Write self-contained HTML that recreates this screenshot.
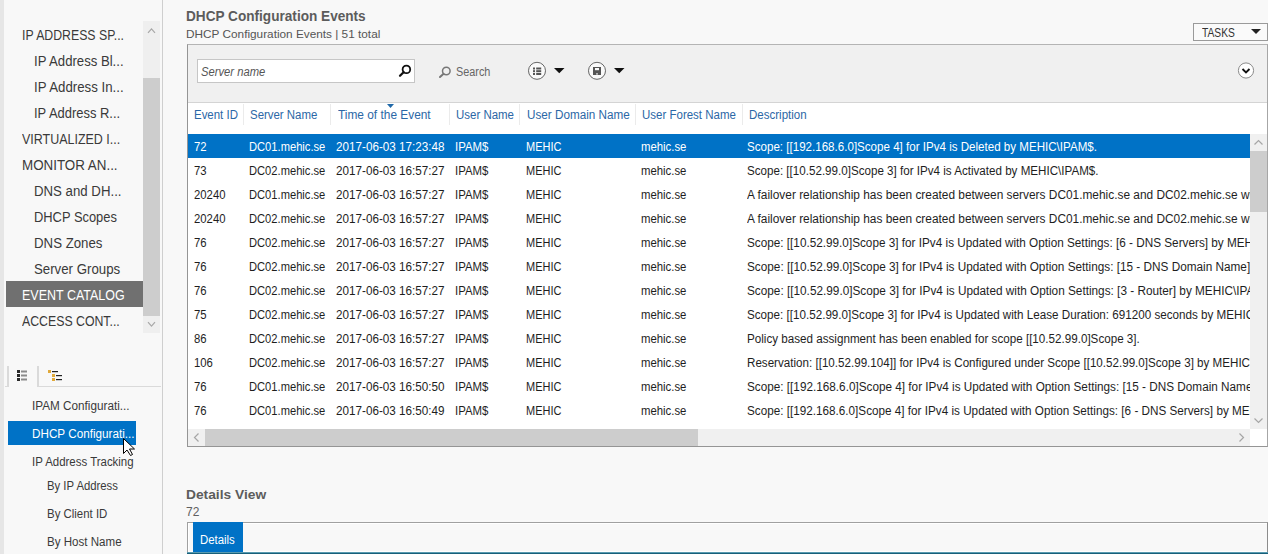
<!DOCTYPE html>
<html><head><meta charset="utf-8">
<style>
*{margin:0;padding:0;box-sizing:border-box}
html,body{width:1268px;height:554px;overflow:hidden;background:#f8f8f8;font-family:"Liberation Sans",sans-serif;color:#222}
.a{position:absolute;white-space:nowrap}
.s{transform-origin:0 0}
#lstrip{left:0;top:0;width:4px;height:554px;background:#e6e6e6}
#vsep{left:162px;top:0;width:1px;height:554px;background:#cfcfcf}
.nav{font-size:14px;color:#3a3a3a;line-height:16px;transform-origin:0 0}
.nsb{left:143px;top:21px;width:17px;height:312px;background:#efefef}
.nthumb{left:143px;top:78px;width:17px;height:238px;background:#cdcdcd}
.ln{font-size:12px;color:#3a3a3a;line-height:14px;transform-origin:0 0}
.title{font-size:14px;font-weight:bold;color:#5c5c5c;line-height:16px;transform-origin:0 0}
.sub{font-size:11.8px;color:#555;line-height:14px}
#grid{left:187px;top:44px;width:1081px;height:403px;border:1px solid #b4b4b4;border-left-color:#959595;border-bottom-color:#959595;border-right-color:#a6a6a6;background:#fff}
#tb{left:188px;top:45px;width:1079px;height:58px;background:#f0f0f0;border-bottom:1px solid #d4d4d4}
.hdr{font-size:12px;color:#2b67a6;line-height:14px;top:108px;transform-origin:0 0}
.csep{width:1px;background:#ebebeb;top:104px;height:21px}
.row{left:188px;width:1062px;height:24px;overflow:hidden}
.row.sel{background:#0072c6}
.c{position:absolute;top:6px;font-size:12px;line-height:14px;color:#1e1e1e;transform-origin:0 0;white-space:nowrap}
.sel .c{color:#fff}
</style></head><body>
<div class="a" id="lstrip"></div>
<div class="a" id="vsep"></div>

<!-- left nav -->
<div class="a nsb"></div>
<div class="a nthumb"></div>
<svg class="a" style="left:143px;top:21px" width="17" height="20"><path d="M5 11.8 L8.5 7.8 L12 11.8" fill="none" stroke="#a8a8a8" stroke-width="1.2"/></svg>
<svg class="a" style="left:143px;top:314px" width="17" height="20"><path d="M5 8.2 L8.5 12.2 L12 8.2" fill="none" stroke="#a8a8a8" stroke-width="1.2"/></svg>
<div class="a nav" style="left:22px;top:27px;transform:scaleX(0.878)">IP ADDRESS SP...</div>
<div class="a nav" style="left:34px;top:53px;transform:scaleX(0.938)">IP Address Bl...</div>
<div class="a nav" style="left:34px;top:79px;transform:scaleX(0.946)">IP Address In...</div>
<div class="a nav" style="left:34px;top:105px;transform:scaleX(0.925)">IP Address R...</div>
<div class="a nav" style="left:22px;top:131px;transform:scaleX(0.891)">VIRTUALIZED I...</div>
<div class="a nav" style="left:22px;top:157px;transform:scaleX(0.955)">MONITOR AN...</div>
<div class="a nav" style="left:34px;top:183px;transform:scaleX(0.945)">DNS and DH...</div>
<div class="a nav" style="left:34px;top:209px;transform:scaleX(0.921)">DHCP Scopes</div>
<div class="a nav" style="left:34px;top:235px;transform:scaleX(0.946)">DNS Zones</div>
<div class="a nav" style="left:34px;top:261px;transform:scaleX(0.946)">Server Groups</div>
<div class="a" style="left:6px;top:281px;width:137px;height:26px;background:#707070"></div>
<div class="a nav" style="left:22px;top:287px;color:#fff;transform:scaleX(0.892)">EVENT CATALOG</div>
<div class="a nav" style="left:22px;top:313px;transform:scaleX(0.879)">ACCESS CONT...</div>

<!-- lower left tabs -->
<div class="a" style="left:7px;top:366px;width:2px;height:21px;background:#dadada"></div>
<div class="a" style="left:5px;top:386px;width:4px;height:1px;background:#dadada"></div>
<div class="a" style="left:37px;top:366px;width:2px;height:21px;background:#dadada"></div>
<div class="a" style="left:37px;top:386px;width:124px;height:1px;background:#dadada"></div>
<svg class="a" style="left:16px;top:369px" width="12" height="13">
 <rect x="1" y="1" width="3" height="3" fill="#2a2a2a"/><rect x="1" y="5" width="3" height="3" fill="#2a2a2a"/><rect x="1" y="9" width="3" height="3" fill="#2a2a2a"/>
 <rect x="5" y="1.5" width="6" height="2" fill="#8a8a8a"/><rect x="5" y="5.5" width="6" height="2" fill="#8a8a8a"/><rect x="5" y="9.5" width="6" height="2" fill="#8a8a8a"/>
</svg>
<svg class="a" style="left:47px;top:369px" width="17" height="13">
 <rect x="1" y="1" width="3" height="3" fill="#e0a93a"/><rect x="5" y="5" width="3" height="3" fill="#e0a93a"/><rect x="5" y="9" width="3" height="3" fill="#e0a93a"/>
 <rect x="5" y="2" width="6" height="1.2" fill="#222"/><rect x="9" y="6" width="6" height="1.2" fill="#222"/><rect x="9" y="10" width="6" height="1.2" fill="#222"/>
</svg>

<div class="a ln" style="left:32px;top:399px;transform:scaleX(0.978)">IPAM Configurati...</div>
<div class="a" style="left:8px;top:421px;width:128px;height:24px;background:#0072c6"></div>
<div class="a ln" style="left:32px;top:427px;color:#fff;transform:scaleX(0.975)">DHCP Configurati...</div>
<div class="a ln" style="left:32px;top:455px;transform:scaleX(0.954)">IP Address Tracking</div>
<div class="a ln" style="left:47px;top:479px;transform:scaleX(0.944)">By IP Address</div>
<div class="a ln" style="left:47px;top:507px;transform:scaleX(0.953)">By Client ID</div>
<div class="a ln" style="left:47px;top:535px;transform:scaleX(0.964)">By Host Name</div>
<svg class="a" style="left:122px;top:437px" width="16" height="22">
 <path d="M1.5 1.5 L1.5 16.5 L5 13 L8.5 18.5 L10.5 17.5 L7.5 12 L12.5 12 Z" fill="#fff" stroke="#000" stroke-width="1" stroke-linejoin="miter"/>
</svg>

<!-- main header -->
<div class="a title" style="left:186px;top:8px;transform:scaleX(0.972)">DHCP Configuration Events</div>
<div class="a sub" style="left:186px;top:26.5px">DHCP Configuration Events | 51 total</div>
<div class="a" style="left:1193px;top:23px;width:75px;height:18px;border:1px solid #9a9a9a;background:#fafafa"></div>
<div class="a" style="left:1202px;top:26px;font-size:12px;line-height:14px;color:#333;transform:scaleX(0.855);transform-origin:0 0">TASKS</div>
<svg class="a" style="left:1251px;top:29px" width="11" height="6"><path d="M0 0 L10 0 L5 5 Z" fill="#222"/></svg>

<div class="a" id="grid"></div>
<div class="a" id="tb"></div>
<!-- toolbar -->
<div class="a" style="left:197px;top:59px;width:218px;height:24px;border:1px solid #c6c6c6;background:#fff"></div>
<div class="a" style="left:201px;top:65px;font-size:12px;line-height:14px;font-style:italic;color:#555;transform:scaleX(0.936);transform-origin:0 0">Server name</div>
<svg class="a" style="left:396px;top:62px" width="16" height="16"><circle cx="10.4" cy="7.4" r="3.8" fill="none" stroke="#111" stroke-width="1.8"/><path d="M7.6 10.2 L4 13.8" stroke="#111" stroke-width="2.2" stroke-linecap="round"/></svg>
<svg class="a" style="left:436px;top:62px" width="16" height="17"><circle cx="10.3" cy="9" r="3.8" fill="none" stroke="#777" stroke-width="1.5"/><path d="M7.6 11.8 L4 15" stroke="#777" stroke-width="2" stroke-linecap="round"/></svg>
<div class="a" style="left:456px;top:65px;font-size:12px;line-height:14px;color:#666;transform:scaleX(0.905);transform-origin:0 0">Search</div>
<svg class="a" style="left:527px;top:61px" width="20" height="20">
 <circle cx="10" cy="9.8" r="8.5" fill="#fafafa" stroke="#666" stroke-width="1"/>
 <rect x="6" y="6.5" width="2" height="2" fill="#555"/><rect x="6" y="9.2" width="2" height="2" fill="#555"/><rect x="6" y="12" width="2" height="2" fill="#555"/>
 <rect x="9.2" y="6.5" width="5" height="2" fill="#555"/><rect x="9.2" y="9.2" width="5" height="2" fill="#555"/><rect x="9.2" y="12" width="5" height="2" fill="#555"/>
</svg>
<svg class="a" style="left:554px;top:68px" width="11" height="6"><path d="M0 0 L10.5 0 L5.25 5.2 Z" fill="#111"/></svg>
<svg class="a" style="left:587px;top:61px" width="20" height="20">
 <circle cx="10" cy="9.8" r="8.5" fill="#fafafa" stroke="#666" stroke-width="1"/>
 <path d="M6 6 L14 6 L14 14 L6 14 Z" fill="#555"/>
 <rect x="8" y="7" width="4" height="2.2" fill="#fafafa"/>
 <rect x="9.3" y="12.2" width="1.4" height="1.4" fill="#fafafa"/>
</svg>
<svg class="a" style="left:614px;top:68px" width="11" height="6"><path d="M0 0 L10.5 0 L5.25 5.2 Z" fill="#111"/></svg>
<svg class="a" style="left:1237px;top:62px" width="18" height="18"><circle cx="9" cy="8.5" r="7.6" fill="#fff" stroke="#8a8a8a" stroke-width="1"/><path d="M5.5 7 L9 10.4 L12.5 7" fill="none" stroke="#111" stroke-width="1.9"/></svg>

<!-- column headers -->
<div class="a csep" style="left:243px"></div>
<div class="a csep" style="left:330px"></div>
<div class="a csep" style="left:449px"></div>
<div class="a csep" style="left:519px"></div>
<div class="a csep" style="left:635px"></div>
<div class="a csep" style="left:742px"></div>
<svg class="a" style="left:387px;top:104px" width="8" height="5"><path d="M0 0 L7 0 L3.5 4 Z" fill="#1f68a8"/></svg>
<div class="a hdr" style="left:194px;transform:scaleX(0.955)">Event ID</div>
<div class="a hdr" style="left:249.5px;transform:scaleX(0.953)">Server Name</div>
<div class="a hdr" style="left:337.5px;transform:scaleX(0.99)">Time of the Event</div>
<div class="a hdr" style="left:456px;transform:scaleX(0.955)">User Name</div>
<div class="a hdr" style="left:527px;transform:scaleX(0.975)">User Domain Name</div>
<div class="a hdr" style="left:642px;transform:scaleX(0.958)">User Forest Name</div>
<div class="a hdr" style="left:749px;transform:scaleX(0.96)">Description</div>

<div class="a row sel" style="top:134px">
<span class="c" style="left:5.5px;transform:scaleX(0.943)">72</span>
<span class="c" style="left:60.5px;transform:scaleX(0.93)">DC01.mehic.se</span>
<span class="c" style="left:147.5px;transform:scaleX(0.974)">2017-06-03 17:23:48</span>
<span class="c" style="left:267px;transform:scaleX(0.95)">IPAM$</span>
<span class="c" style="left:338px;transform:scaleX(0.915)">MEHIC</span>
<span class="c" style="left:452.5px;transform:scaleX(0.946)">mehic.se</span>
<span class="c" style="left:559px;transform:scaleX(0.965)">Scope: [[192.168.6.0]Scope 4] for IPv4 is Deleted by MEHIC\IPAM$.</span>
</div>
<div class="a row" style="top:158px">
<span class="c" style="left:5.5px;transform:scaleX(0.943)">73</span>
<span class="c" style="left:60.5px;transform:scaleX(0.93)">DC02.mehic.se</span>
<span class="c" style="left:147.5px;transform:scaleX(0.974)">2017-06-03 16:57:27</span>
<span class="c" style="left:267px;transform:scaleX(0.95)">IPAM$</span>
<span class="c" style="left:338px;transform:scaleX(0.915)">MEHIC</span>
<span class="c" style="left:452.5px;transform:scaleX(0.946)">mehic.se</span>
<span class="c" style="left:559px;transform:scaleX(0.9675)">Scope: [[10.52.99.0]Scope 3] for IPv4 is Activated by MEHIC\IPAM$.</span>
</div>
<div class="a row" style="top:182px">
<span class="c" style="left:5.5px;transform:scaleX(0.943)">20240</span>
<span class="c" style="left:60.5px;transform:scaleX(0.93)">DC01.mehic.se</span>
<span class="c" style="left:147.5px;transform:scaleX(0.974)">2017-06-03 16:57:27</span>
<span class="c" style="left:267px;transform:scaleX(0.95)">IPAM$</span>
<span class="c" style="left:338px;transform:scaleX(0.915)">MEHIC</span>
<span class="c" style="left:452.5px;transform:scaleX(0.946)">mehic.se</span>
<span class="c" style="left:559px;transform:scaleX(0.99)">A failover relationship has been created between servers DC01.mehic.se and DC02.mehic.se with</span>
</div>
<div class="a row" style="top:206px">
<span class="c" style="left:5.5px;transform:scaleX(0.943)">20240</span>
<span class="c" style="left:60.5px;transform:scaleX(0.93)">DC02.mehic.se</span>
<span class="c" style="left:147.5px;transform:scaleX(0.974)">2017-06-03 16:57:27</span>
<span class="c" style="left:267px;transform:scaleX(0.95)">IPAM$</span>
<span class="c" style="left:338px;transform:scaleX(0.915)">MEHIC</span>
<span class="c" style="left:452.5px;transform:scaleX(0.946)">mehic.se</span>
<span class="c" style="left:559px;transform:scaleX(0.99)">A failover relationship has been created between servers DC01.mehic.se and DC02.mehic.se with</span>
</div>
<div class="a row" style="top:230px">
<span class="c" style="left:5.5px;transform:scaleX(0.943)">76</span>
<span class="c" style="left:60.5px;transform:scaleX(0.93)">DC02.mehic.se</span>
<span class="c" style="left:147.5px;transform:scaleX(0.974)">2017-06-03 16:57:27</span>
<span class="c" style="left:267px;transform:scaleX(0.95)">IPAM$</span>
<span class="c" style="left:338px;transform:scaleX(0.915)">MEHIC</span>
<span class="c" style="left:452.5px;transform:scaleX(0.946)">mehic.se</span>
<span class="c" style="left:559px;transform:scaleX(0.979)">Scope: [[10.52.99.0]Scope 3] for IPv4 is Updated with Option Settings: [6 - DNS Servers] by MEHIC\IPAM$.</span>
</div>
<div class="a row" style="top:254px">
<span class="c" style="left:5.5px;transform:scaleX(0.943)">76</span>
<span class="c" style="left:60.5px;transform:scaleX(0.93)">DC02.mehic.se</span>
<span class="c" style="left:147.5px;transform:scaleX(0.974)">2017-06-03 16:57:27</span>
<span class="c" style="left:267px;transform:scaleX(0.95)">IPAM$</span>
<span class="c" style="left:338px;transform:scaleX(0.915)">MEHIC</span>
<span class="c" style="left:452.5px;transform:scaleX(0.946)">mehic.se</span>
<span class="c" style="left:559px;transform:scaleX(0.981)">Scope: [[10.52.99.0]Scope 3] for IPv4 is Updated with Option Settings: [15 - DNS Domain Name] by MEHIC\IPAM$.</span>
</div>
<div class="a row" style="top:278px">
<span class="c" style="left:5.5px;transform:scaleX(0.943)">76</span>
<span class="c" style="left:60.5px;transform:scaleX(0.93)">DC02.mehic.se</span>
<span class="c" style="left:147.5px;transform:scaleX(0.974)">2017-06-03 16:57:27</span>
<span class="c" style="left:267px;transform:scaleX(0.95)">IPAM$</span>
<span class="c" style="left:338px;transform:scaleX(0.915)">MEHIC</span>
<span class="c" style="left:452.5px;transform:scaleX(0.946)">mehic.se</span>
<span class="c" style="left:559px;transform:scaleX(0.982)">Scope: [[10.52.99.0]Scope 3] for IPv4 is Updated with Option Settings: [3 - Router] by MEHIC\IPAM$.</span>
</div>
<div class="a row" style="top:302px">
<span class="c" style="left:5.5px;transform:scaleX(0.943)">75</span>
<span class="c" style="left:60.5px;transform:scaleX(0.93)">DC02.mehic.se</span>
<span class="c" style="left:147.5px;transform:scaleX(0.974)">2017-06-03 16:57:27</span>
<span class="c" style="left:267px;transform:scaleX(0.95)">IPAM$</span>
<span class="c" style="left:338px;transform:scaleX(0.915)">MEHIC</span>
<span class="c" style="left:452.5px;transform:scaleX(0.946)">mehic.se</span>
<span class="c" style="left:559px;transform:scaleX(0.971)">Scope: [[10.52.99.0]Scope 3] for IPv4 is Updated with Lease Duration: 691200 seconds by MEHIC\IPAM$.</span>
</div>
<div class="a row" style="top:326px">
<span class="c" style="left:5.5px;transform:scaleX(0.943)">86</span>
<span class="c" style="left:60.5px;transform:scaleX(0.93)">DC02.mehic.se</span>
<span class="c" style="left:147.5px;transform:scaleX(0.974)">2017-06-03 16:57:27</span>
<span class="c" style="left:267px;transform:scaleX(0.95)">IPAM$</span>
<span class="c" style="left:338px;transform:scaleX(0.915)">MEHIC</span>
<span class="c" style="left:452.5px;transform:scaleX(0.946)">mehic.se</span>
<span class="c" style="left:559px;transform:scaleX(0.97)">Policy based assignment has been enabled for scope [[10.52.99.0]Scope 3].</span>
</div>
<div class="a row" style="top:350px">
<span class="c" style="left:5.5px;transform:scaleX(0.943)">106</span>
<span class="c" style="left:60.5px;transform:scaleX(0.93)">DC02.mehic.se</span>
<span class="c" style="left:147.5px;transform:scaleX(0.974)">2017-06-03 16:57:27</span>
<span class="c" style="left:267px;transform:scaleX(0.95)">IPAM$</span>
<span class="c" style="left:338px;transform:scaleX(0.915)">MEHIC</span>
<span class="c" style="left:452.5px;transform:scaleX(0.946)">mehic.se</span>
<span class="c" style="left:559px;transform:scaleX(0.968)">Reservation: [[10.52.99.104]] for IPv4 is Configured under Scope [[10.52.99.0]Scope 3] by MEHIC\IPAM$.</span>
</div>
<div class="a row" style="top:374px">
<span class="c" style="left:5.5px;transform:scaleX(0.943)">76</span>
<span class="c" style="left:60.5px;transform:scaleX(0.93)">DC01.mehic.se</span>
<span class="c" style="left:147.5px;transform:scaleX(0.974)">2017-06-03 16:50:50</span>
<span class="c" style="left:267px;transform:scaleX(0.95)">IPAM$</span>
<span class="c" style="left:338px;transform:scaleX(0.915)">MEHIC</span>
<span class="c" style="left:452.5px;transform:scaleX(0.946)">mehic.se</span>
<span class="c" style="left:559px;transform:scaleX(0.979)">Scope: [[192.168.6.0]Scope 4] for IPv4 is Updated with Option Settings: [15 - DNS Domain Name] by MEHIC\IPAM$.</span>
</div>
<div class="a row" style="top:398px">
<span class="c" style="left:5.5px;transform:scaleX(0.943)">76</span>
<span class="c" style="left:60.5px;transform:scaleX(0.93)">DC01.mehic.se</span>
<span class="c" style="left:147.5px;transform:scaleX(0.974)">2017-06-03 16:50:49</span>
<span class="c" style="left:267px;transform:scaleX(0.95)">IPAM$</span>
<span class="c" style="left:338px;transform:scaleX(0.915)">MEHIC</span>
<span class="c" style="left:452.5px;transform:scaleX(0.946)">mehic.se</span>
<span class="c" style="left:559px;transform:scaleX(0.976)">Scope: [[192.168.6.0]Scope 4] for IPv4 is Updated with Option Settings: [6 - DNS Servers] by MEHIC\IPAM$.</span>
</div>

<!-- v scrollbar -->
<div class="a" style="left:1250px;top:134px;width:17px;height:295px;background:#f0f0f0"></div>
<div class="a" style="left:1250px;top:151px;width:17px;height:61px;background:#cdcdcd"></div>
<svg class="a" style="left:1250px;top:134px" width="17" height="17"><path d="M4.5 10.5 L8.5 6.5 L12.5 10.5" fill="none" stroke="#a6a6a6" stroke-width="1.2"/></svg>
<svg class="a" style="left:1250px;top:412px" width="17" height="17"><path d="M4.5 6.5 L8.5 10.5 L12.5 6.5" fill="none" stroke="#a6a6a6" stroke-width="1.2"/></svg>
<!-- h scrollbar -->
<div class="a" style="left:188px;top:429px;width:1062px;height:17px;background:#f0f0f0"></div>
<div class="a" style="left:205px;top:429px;width:493px;height:17px;background:#cdcdcd"></div>
<svg class="a" style="left:188px;top:429px" width="17" height="17"><path d="M10.5 4.5 L6.5 8.5 L10.5 12.5" fill="none" stroke="#a6a6a6" stroke-width="1.2"/></svg>
<svg class="a" style="left:1233px;top:429px" width="17" height="17"><path d="M6.5 4.5 L10.5 8.5 L6.5 12.5" fill="none" stroke="#a6a6a6" stroke-width="1.2"/></svg>

<!-- details -->
<div class="a title" style="left:186px;top:487px;font-size:13px;transform:scaleX(1.06)">Details View</div>
<div class="a sub" style="left:186px;top:505px;font-size:12px;color:#606060">72</div>
<div class="a" style="left:187px;top:522px;width:1081px;height:40px;border:1px solid #a0a0a0;border-right-color:#8c8c8c;background:#f8f8f8;box-shadow:inset 1px 1px 0 #fff"></div>
<div class="a" style="left:193px;top:522px;width:50px;height:30px;background:#0072c6;z-index:2"></div>
<div class="a" style="left:200px;top:533px;z-index:3;font-size:12px;line-height:14px;color:#fff;transform:scaleX(0.948);transform-origin:0 0">Details</div>
<div class="a" style="left:187px;top:552px;width:1081px;height:1px;background:#5a9bb0"></div><div class="a" style="left:187px;top:553px;width:1081px;height:1px;background:#17607a"></div><div class="a" style="left:188px;top:551px;width:1079px;height:1px;background:#fff"></div>
</body></html>
